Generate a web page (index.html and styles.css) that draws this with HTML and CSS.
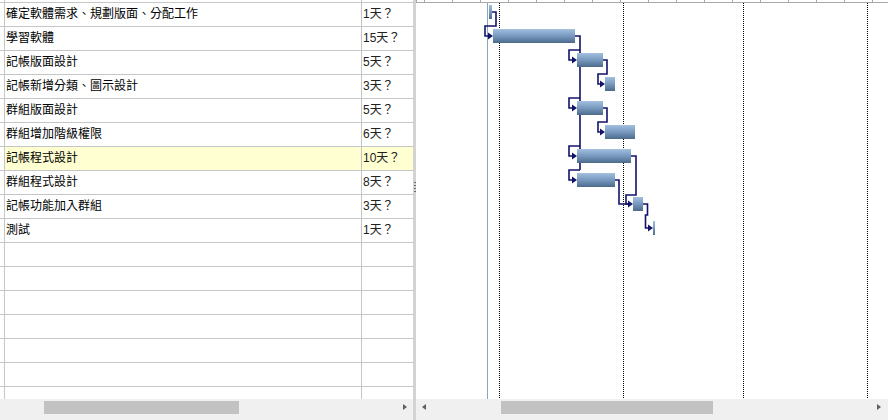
FILE: index.html
```html
<!DOCTYPE html>
<html lang="zh-Hant">
<head>
<meta charset="utf-8">
<title>Gantt</title>
<link rel="stylesheet" href="styles.css">
</head>
<body>
<div class="app">
  <div class="left">
    <div class="table">
      <div class="thead"><div class="ind"></div><div class="name"></div><div class="dur"></div></div>
      <div class="row"><div class="ind"></div><div class="name">確定軟體需求、規劃版面、分配工作</div><div class="dur">1天？</div></div>
      <div class="row"><div class="ind"></div><div class="name">學習軟體</div><div class="dur">15天？</div></div>
      <div class="row"><div class="ind"></div><div class="name">記帳版面設計</div><div class="dur">5天？</div></div>
      <div class="row"><div class="ind"></div><div class="name">記帳新增分類、圖示設計</div><div class="dur">3天？</div></div>
      <div class="row"><div class="ind"></div><div class="name">群組版面設計</div><div class="dur">5天？</div></div>
      <div class="row"><div class="ind"></div><div class="name">群組增加階級權限</div><div class="dur">6天？</div></div>
      <div class="row sel"><div class="ind"></div><div class="name">記帳程式設計</div><div class="dur">10天？</div></div>
      <div class="row"><div class="ind"></div><div class="name">群組程式設計</div><div class="dur">8天？</div></div>
      <div class="row"><div class="ind"></div><div class="name">記帳功能加入群組</div><div class="dur">3天？</div></div>
      <div class="row"><div class="ind"></div><div class="name">測試</div><div class="dur">1天？</div></div>
      <div class="row"><div class="ind"></div><div class="name"></div><div class="dur"></div></div>
      <div class="row"><div class="ind"></div><div class="name"></div><div class="dur"></div></div>
      <div class="row"><div class="ind"></div><div class="name"></div><div class="dur"></div></div>
      <div class="row"><div class="ind"></div><div class="name"></div><div class="dur"></div></div>
      <div class="row"><div class="ind"></div><div class="name"></div><div class="dur"></div></div>
      <div class="row"><div class="ind"></div><div class="name"></div><div class="dur"></div></div>
      <div class="row"><div class="ind"></div><div class="name"></div><div class="dur"></div></div>
    </div>
    <div class="hscroll">
      <div class="thumb thumb-left"></div>
      <div class="arrow arrow-right"></div>
    </div>
  </div>
  <div class="splitter"><div class="grip"></div></div>
  <div class="right">
    <svg class="chart" width="472" height="399" viewBox="0 0 472 399" xmlns="http://www.w3.org/2000/svg">
      <defs>
        <linearGradient id="bar" x1="0" y1="0" x2="0" y2="1">
          <stop offset="0" stop-color="#a3c0de"/>
          <stop offset="0.45" stop-color="#7b9dc3"/>
          <stop offset="1" stop-color="#4d6a8b"/>
        </linearGradient>
      </defs>
      <g shape-rendering="crispEdges">
        <line x1="0" y1="2.5" x2="472" y2="2.5" stroke="#a8a8a8"/>
        <line x1="0.5" y1="0" x2="0.5" y2="3" stroke="#a8a8a8"/>
        <g stroke="#a8a8a8">
          <line x1="8.5" y1="0" x2="8.5" y2="2"/>
          <line x1="36.5" y1="0" x2="36.5" y2="2"/>
          <line x1="64.5" y1="0" x2="64.5" y2="2"/>
          <line x1="92.5" y1="0" x2="92.5" y2="2"/>
          <line x1="120.5" y1="0" x2="120.5" y2="2"/>
          <line x1="148.5" y1="0" x2="148.5" y2="2"/>
          <line x1="176.5" y1="0" x2="176.5" y2="2"/>
          <line x1="204.5" y1="0" x2="204.5" y2="2"/>
          <line x1="232.5" y1="0" x2="232.5" y2="2"/>
          <line x1="260.5" y1="0" x2="260.5" y2="2"/>
          <line x1="288.5" y1="0" x2="288.5" y2="2"/>
          <line x1="316.5" y1="0" x2="316.5" y2="2"/>
          <line x1="344.5" y1="0" x2="344.5" y2="2"/>
          <line x1="372.5" y1="0" x2="372.5" y2="2"/>
          <line x1="400.5" y1="0" x2="400.5" y2="2"/>
          <line x1="428.5" y1="0" x2="428.5" y2="2"/>
          <line x1="456.5" y1="0" x2="456.5" y2="2"/>
        </g>
        <line x1="71.5" y1="3" x2="71.5" y2="399" stroke="#8aa5bd"/>
        <g stroke="#000" stroke-dasharray="1 1">
          <line x1="83.5" y1="3" x2="83.5" y2="399"/>
          <line x1="207.5" y1="3" x2="207.5" y2="399"/>
          <line x1="327.5" y1="3" x2="327.5" y2="399"/>
          <line x1="451.5" y1="3" x2="451.5" y2="399"/>
        </g>
      </g>
      <g fill="none" stroke="#12126a" stroke-width="1.6">
        <path d="M76,12 H80 V26 H69 V36 H73"/>
        <path d="M159,36 H164 V170"/>
        <path d="M164,50 H153 V60 H157"/>
        <path d="M164,98 H153 V108 H157"/>
        <path d="M164,146 H153 V156 H157"/>
        <path d="M164,170 H153 V180 H157"/>
        <path d="M187,60 H191 V74 H182 V84 H185"/>
        <path d="M187,108 H191 V122 H182 V132 H185"/>
        <path d="M215,156 H220 V195 H210 V204 H213"/>
        <path d="M199,180 H203 V204 H213"/>
        <path d="M227,204 H231.5 V215 H229.5 V228 H233"/>
      </g>
      <g fill="#12126a">
        <polygon points="72,32.5 77,36 72,39.5"/>
        <polygon points="156,56.5 161,60 156,63.5"/>
        <polygon points="156,104.5 161,108 156,111.5"/>
        <polygon points="156,152.5 161,156 156,159.5"/>
        <polygon points="156,176.5 161,180 156,183.5"/>
        <polygon points="184,80.5 189,84 184,87.5"/>
        <polygon points="184,128.5 189,132 184,135.5"/>
        <polygon points="212,200.5 217,204 212,207.5"/>
        <polygon points="232,224.5 237,228 232,231.5"/>
      </g>
      <g fill="url(#bar)">
        <rect x="73" y="5" width="3" height="14"/>
        <rect x="77" y="29" width="82" height="14"/>
        <rect x="161" y="53" width="26" height="14"/>
        <rect x="189" y="77" width="10" height="14"/>
        <rect x="161" y="101" width="26" height="14"/>
        <rect x="189" y="125" width="30" height="14"/>
        <rect x="161" y="149" width="54" height="14"/>
        <rect x="161" y="173" width="38" height="14"/>
        <rect x="217" y="197" width="10" height="14"/>
        <rect x="237" y="221" width="2" height="14"/>
      </g>
    </svg>
    <div class="hscroll">
      <div class="arrow arrow-left"></div>
      <div class="thumb thumb-right"></div>
      <div class="arrow arrow-right arrow-far"></div>
    </div>
  </div>
</div>
</body>
</html>
```

FILE: styles.css
```css
* { box-sizing: border-box; }
html, body {
  margin: 0;
  padding: 0;
  background: #ffffff;
}
body {
  width: 888px;
  height: 420px;
  overflow: hidden;
  font-family: "Liberation Sans", "Noto Sans CJK TC", sans-serif;
  font-size: 12px;
  color: #000;
}
.app {
  display: flex;
  height: 420px;
}
.left {
  width: 413px;
  display: flex;
  flex-direction: column;
}
.table {
  height: 399px;
  overflow: hidden;
}
.thead, .row {
  display: grid;
  grid-template-columns: 4px 357px 52px;
  border-bottom: 1px solid #c6c6c6;
}
.thead { height: 3px; }
.row { height: 24px; }
.name, .dur {
  border-left: 1px solid #c6c6c6;
  line-height: 23px;
  white-space: nowrap;
  overflow: hidden;
}
.name { padding-left: 1px; }
.dur { padding-left: 1px; color: #222; }
.row.sel .name, .row.sel .dur { background: #ffffd2; }
.hscroll {
  position: relative;
  flex: 1;
  background: #f0f0f0;
}
.thumb {
  position: absolute;
  top: 2px;
  height: 13px;
  background: #c2c2c2;
}
.thumb-left { left: 44px; width: 195px; }
.thumb-right { left: 85px; width: 212px; }
.arrow {
  position: absolute;
  top: 5px;
  width: 0;
  height: 0;
  border-top: 3.5px solid transparent;
  border-bottom: 3.5px solid transparent;
}
.arrow-right { left: 403px; border-left: 4px solid #606060; }
.arrow-left { left: 6px; border-right: 4px solid #606060; }
.arrow-far { left: 461px; }
.splitter {
  position: relative;
  width: 3px;
  background: #d3d3d3;
}
.grip {
  position: absolute;
  left: 1px;
  top: 182px;
  width: 2px;
  height: 12px;
  background: repeating-linear-gradient(#6a6a6a 0 1px, transparent 1px 3px);
}
.right {
  flex: 1;
  display: flex;
  flex-direction: column;
}
.chart { display: block; }
```
